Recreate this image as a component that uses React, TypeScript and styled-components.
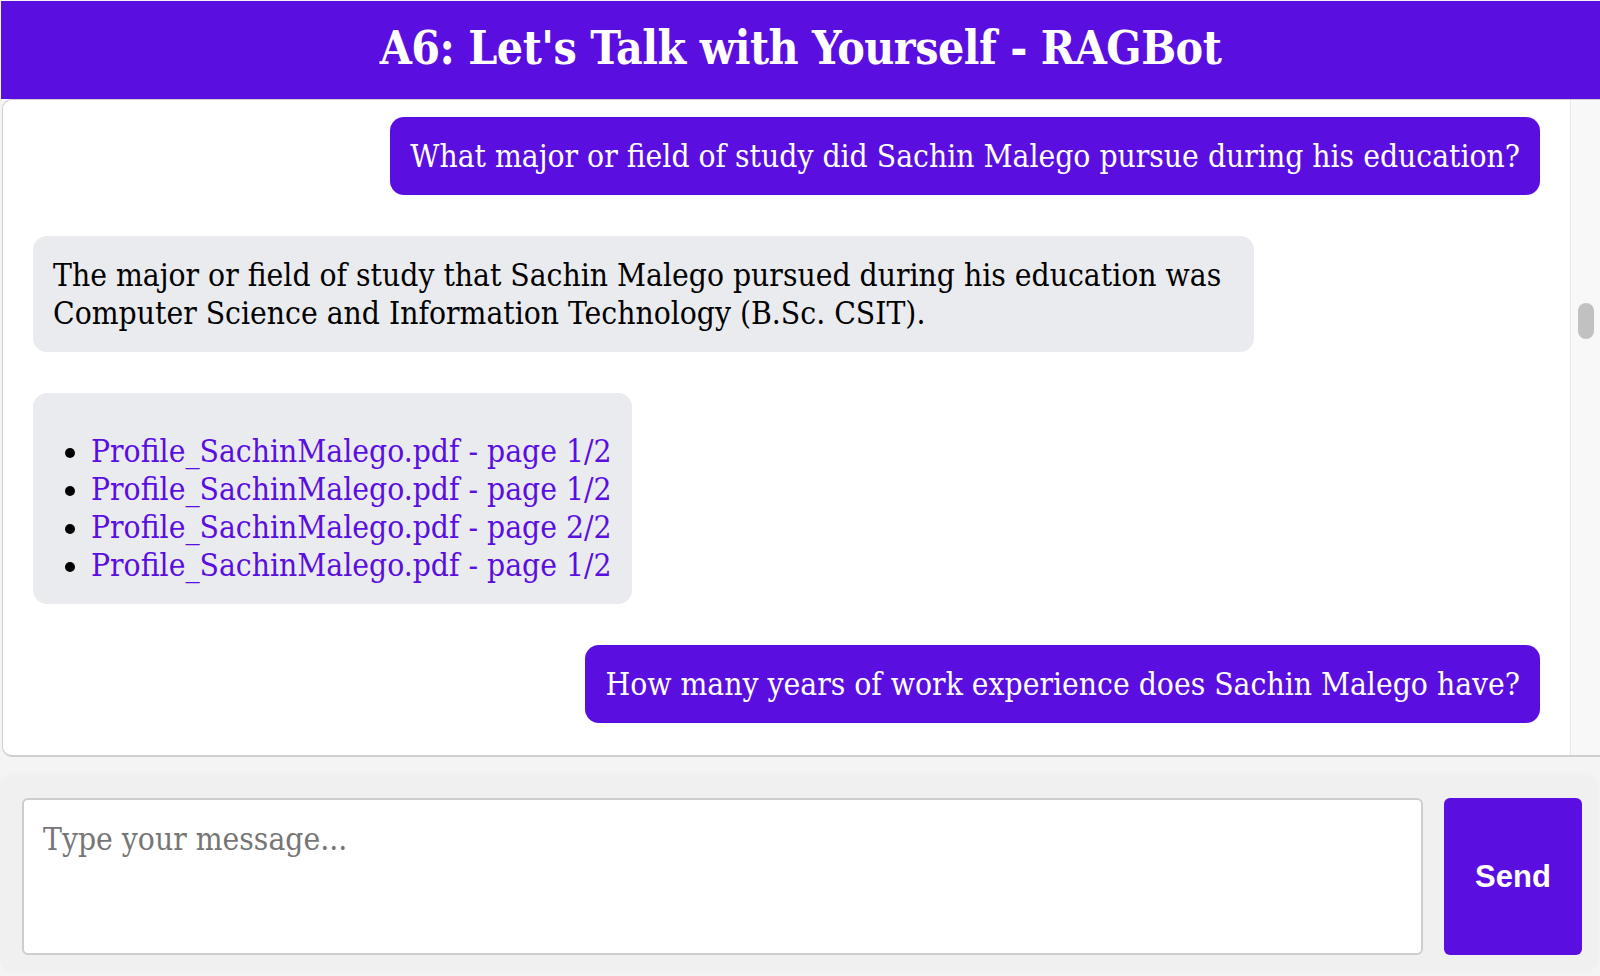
import { FC } from "react";
import styled, { createGlobalStyle } from "styled-components";

const GlobalStyle = createGlobalStyle`
  html, body {
    margin: 0;
    padding: 0;
    background-color: #f4f4f4;
  }
  body {
    font-family: "DejaVu Serif Condensed", "DejaVu Serif", serif;
  }
  * {
    box-sizing: border-box;
  }
`;

const PURPLE = "#5a0fe0";

const Page = styled.div`
  display: flex;
  flex-direction: column;
  height: 976px;
  padding: 1px 0 4px 1px;
`;

const Header = styled.header`
  flex: 0 0 98px;
  background-color: ${PURPLE};
  display: flex;
  align-items: center;
  justify-content: center;
  padding-bottom: 4px;
`;

const Title = styled.h1`
  margin: 0;
  color: #ffffff;
  font-size: 46px;
  font-weight: 700;
  letter-spacing: -0.5px;
`;

const ChatBox = styled.div`
  flex: 1;
  min-height: 0;
  margin-left: 1px;
  display: flex;
  background-color: #ffffff;
  border: 1px solid #cfcfcf;
  border-bottom-width: 2px;
  border-right: none;
  border-radius: 10px 0 0 10px;
  overflow: hidden;
`;

const MessageList = styled.div`
  flex: 1;
  min-width: 0;
  padding: 17px 30px 36px 30px;
  display: flex;
  flex-direction: column;
  gap: 41px;
`;

const ScrollTrack = styled.div`
  flex: 0 0 30px;
  background-color: #f8f8f8;
  border-left: 1px solid #e6e6e6;
  padding: 203px 6px 0 7px;
`;

const ScrollThumb = styled.div`
  height: 36px;
  border-radius: 8px;
  background-color: #c1c1c1;
`;

const Bubble = styled.div<{ $from: "user" | "bot" }>`
  align-self: ${({ $from }) => ($from === "user" ? "flex-end" : "flex-start")};
  max-width: 81%;
  padding: 20px;
  border-radius: 14px;
  font-size: 31.5px;
  line-height: 38px;
  background-color: ${({ $from }) => ($from === "user" ? PURPLE : "#eaebef")};
  color: ${({ $from }) => ($from === "user" ? "#ffffff" : "#000000")};
`;

const SourceList = styled.ul`
  margin: 19px 0 0;
  padding-left: 38px;
`;

const SourceLink = styled.a`
  color: ${PURPLE};
  text-decoration: none;
`;

const InputBar = styled.div`
  margin-top: 20px;
  margin-right: 3px;
  display: flex;
  gap: 21px;
  padding: 21px 15px 17px 21px;
  background-color: #f0f0f0;
  border-radius: 12px;
  box-shadow: 0 -2px 6px rgba(0, 0, 0, 0.03);
`;

const MessageInput = styled.textarea`
  flex: 1;
  height: 157px;
  resize: none;
  padding: 20px 19px;
  border: 2px solid #cdcdcd;
  border-radius: 6px;
  background-color: #ffffff;
  font-family: inherit;
  font-size: 31.5px;
  line-height: 38px;
  color: #000000;
  outline: none;
  &::placeholder {
    color: #767676;
  }
`;

const SendButton = styled.button`
  flex: 0 0 138px;
  height: 157px;
  border: none;
  border-radius: 6px;
  background-color: ${PURPLE};
  color: #ffffff;
  font-family: "Liberation Sans", Arial, sans-serif;
  font-weight: 700;
  font-size: 31px;
  cursor: pointer;
`;

interface Message {
  from: "user" | "bot";
  text?: string;
  sources?: string[];
}

const messages: Message[] = [
  {
    from: "user",
    text: "What major or field of study did Sachin Malego pursue during his education?",
  },
  {
    from: "bot",
    text: "The major or field of study that Sachin Malego pursued during his education was Computer Science and Information Technology (B.Sc. CSIT).",
  },
  {
    from: "bot",
    sources: [
      "Profile_SachinMalego.pdf - page 1/2",
      "Profile_SachinMalego.pdf - page 1/2",
      "Profile_SachinMalego.pdf - page 2/2",
      "Profile_SachinMalego.pdf - page 1/2",
    ],
  },
  {
    from: "user",
    text: "How many years of work experience does Sachin Malego have?",
  },
];

const App: FC = () => {
  return (
    <>
      <GlobalStyle />
      <Page>
        <Header>
          <Title>A6: Let's Talk with Yourself - RAGBot</Title>
        </Header>
        <ChatBox>
          <MessageList>
            {messages.map((message, index) => (
              <Bubble key={index} $from={message.from}>
                {message.text}
                {message.sources && (
                  <SourceList>
                    {message.sources.map((source, i) => (
                      <li key={i}>
                        <SourceLink href="#">{source}</SourceLink>
                      </li>
                    ))}
                  </SourceList>
                )}
              </Bubble>
            ))}
          </MessageList>
          <ScrollTrack>
            <ScrollThumb />
          </ScrollTrack>
        </ChatBox>
        <InputBar>
          <MessageInput placeholder="Type your message..." />
          <SendButton>Send</SendButton>
        </InputBar>
      </Page>
    </>
  );
};

export default App;
